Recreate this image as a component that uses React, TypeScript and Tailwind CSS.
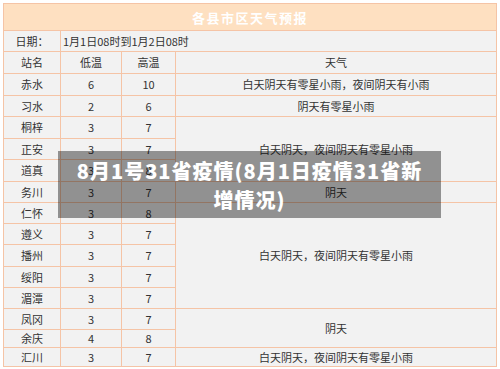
const rows: { name: string; lo: string; hi: string; h: number }[] = [
  { name: "赤水", lo: "6", hi: "10", h: 22 },
  { name: "习水", lo: "2", hi: "6", h: 21 },
  { name: "桐梓", lo: "3", hi: "7", h: 22 },
  { name: "正安", lo: "3", hi: "7", h: 21 },
  { name: "道真", lo: "3", hi: "8", h: 22 },
  { name: "务川", lo: "3", hi: "7", h: 21 },
  { name: "仁怀", lo: "3", hi: "8", h: 21 },
  { name: "遵义", lo: "3", hi: "7", h: 21 },
  { name: "播州", lo: "3", hi: "7", h: 22 },
  { name: "绥阳", lo: "3", hi: "7", h: 21 },
  { name: "湄潭", lo: "3", hi: "7", h: 21 },
  { name: "凤冈", lo: "3", hi: "7", h: 21 },
  { name: "余庆", lo: "4", hi: "8", h: 18 },
  { name: "汇川", lo: "3", hi: "7", h: 19 },
];

// weather cell per starting row index: [text, rowSpan]
const weather: Record<number, [string, number]> = {
  0: ["白天阴天有零星小雨，夜间阴天有小雨", 1],
  1: ["阴天有零星小雨", 1],
  2: ["白天阴天，夜间阴天有零星小雨", 3],
  5: ["阴天", 1],
  6: ["白天阴天，夜间阴天有零星小雨", 5],
  11: ["阴天", 2],
  13: ["白天阴天，夜间阴天有零星小雨", 1],
};

const cell = "border border-[#f5c4a6] text-center p-0 leading-none";

export default function App() {
  return (
    <div
      className="relative w-[500px] h-[369px] bg-white pt-[3px] pl-[3px] overflow-hidden text-[#333]"
      style={{ fontFamily: '"Noto Sans CJK SC", "Noto Sans", sans-serif' }}
    >
      <table className="w-[494px] table-fixed border-collapse bg-[#f2f2f2] text-[11px]">
        <colgroup>
          <col className="w-[57px]" />
          <col className="w-[61px]" />
          <col className="w-[54px]" />
          <col />
        </colgroup>
        <tbody>
          <tr className="h-[27px]">
            <td
              colSpan={4}
              className={`${cell} bg-[#fee0c1] text-white font-bold text-[13px] tracking-[1.5px]`}
            >
              各县市区天气预报
            </td>
          </tr>
          <tr className="h-[21px]">
            <td className={cell}>日期：</td>
            <td colSpan={3} className={`${cell} text-left pl-[2px]`}>
              1月1日08时到1月2日08时
            </td>
          </tr>
          <tr className="h-[22px]">
            <td className={cell}>站名</td>
            <td className={cell}>低温</td>
            <td className={cell}>高温</td>
            <td className={cell}>天气</td>
          </tr>
          {rows.map((r, i) => (
            <tr key={r.name} style={{ height: r.h }}>
              <td className={cell}>{r.name}</td>
              <td className={cell}>{r.lo}</td>
              <td className={cell}>{r.hi}</td>
              {weather[i] && (
                <td rowSpan={weather[i][1]} className={cell}>
                  {weather[i][0]}
                </td>
              )}
            </tr>
          ))}
        </tbody>
      </table>

      <div className="absolute left-[58px] top-[151px] w-[383px] h-[67px] bg-black/40 flex items-center justify-center">
        <p className="w-[352px] text-white font-black text-[20px] leading-[29px] tracking-[1px] text-center">
          8月1号31省疫情(8月1日疫情31省新增情况)
        </p>
      </div>
    </div>
  );
}
